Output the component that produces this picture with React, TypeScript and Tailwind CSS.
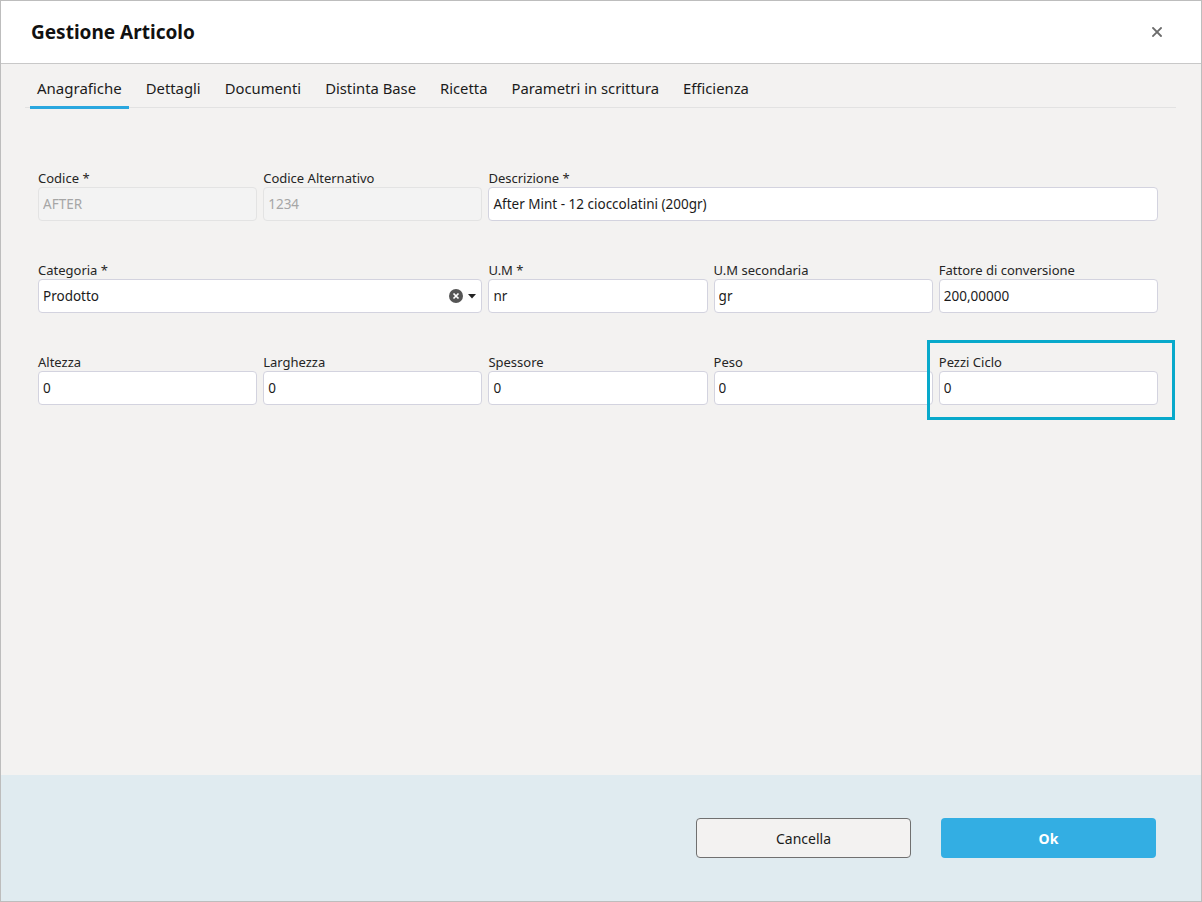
import { ReactNode } from "react";

const tabs = [
  "Anagrafiche",
  "Dettagli",
  "Documenti",
  "Distinta Base",
  "Ricetta",
  "Parametri in scrittura",
  "Efficienza",
];

function Field({
  label,
  value,
  disabled,
  className,
  children,
}: {
  label: string;
  value: string;
  disabled?: boolean;
  className?: string;
  children?: ReactNode;
}) {
  return (
    <div className={"relative flex flex-col " + (className ?? "")}>
      <label className="text-[13px] leading-[17px] text-[#252525]">{label}</label>
      <div
        className={
          disabled
            ? "h-[34px] rounded-[4px] border border-[#e3e3e3] bg-[#f3f3f3] px-[4px] flex items-center text-[13.5px] text-[#a6a6a6]"
            : "h-[34px] rounded-[4px] border border-[#d3d3df] bg-white px-[4px] flex items-center text-[13.5px] text-[#1b1b1b]"
        }
      >
        <span className="flex-1 truncate">{value}</span>
        {children}
      </div>
    </div>
  );
}

function App() {
  return (
    <div
      className="w-[1202px] h-[902px] border border-[#bdbdbd] flex flex-col bg-[#f3f2f1]"
      style={{ fontFamily: '"Noto Sans", "Open Sans", sans-serif' }}
    >
      <div className="h-[63px] shrink-0 bg-white border-b border-[#c8c8c8] flex items-center justify-between pl-[30px] pr-[39px]">
        <h1 className="text-[19px] font-bold text-[#111]">Gestione Articolo</h1>
        <svg width="10" height="10" viewBox="0 0 10 10" className="text-[#6b6b6b]">
          <path d="M1 1L9 9M9 1L1 9" stroke="currentColor" strokeWidth="1.8" strokeLinecap="square" />
        </svg>
      </div>

      <div className="flex-1 flex flex-col">
        <div className="mt-[12px] ml-[24px] mr-[25px] h-[32px] border-b border-[#e2e2e2] flex gap-[10px] pl-[5px]">
          {tabs.map((t, i) => (
            <div
              key={t}
              className={
                i === 0
                  ? "h-[33px] px-[7px] border-b-[3px] border-[#2aa7df] text-[15px] leading-[24px] text-[#1b1b1b]"
                  : "h-[33px] px-[7px] text-[14.8px] leading-[24px] text-[#1b1b1b]"
              }
            >
              {t}
            </div>
          ))}
        </div>

        <div className="mt-[62px] ml-[37px] w-[1120px] grid grid-cols-5 gap-x-[6px] gap-y-[41px]">
          <Field label="Codice *" value="AFTER" disabled />
          <Field label="Codice Alternativo" value="1234" disabled />
          <Field label="Descrizione *" value="After Mint - 12 cioccolatini (200gr)" className="col-span-3" />

          <Field label="Categoria *" value="Prodotto" className="col-span-2">
            <div className="flex items-center gap-[5px] pr-[1px]">
              <svg width="14" height="14" viewBox="0 0 14 14">
                <circle cx="7" cy="7" r="7" fill="#555" />
                <path d="M4.5 4.5L9.5 9.5M9.5 4.5L4.5 9.5" stroke="#fff" strokeWidth="1.7" />
              </svg>
              <svg width="8" height="5" viewBox="0 0 8 5">
                <path d="M0 0H8L4 4.5Z" fill="#222" />
              </svg>
            </div>
          </Field>
          <Field label="U.M *" value="nr" />
          <Field label="U.M secondaria" value="gr" />
          <Field label="Fattore di conversione" value="200,00000" />

          <Field label="Altezza" value="0" />
          <Field label="Larghezza" value="0" />
          <Field label="Spessore" value="0" />
          <Field label="Peso" value="0" />
          <Field label="Pezzi Ciclo" value="0">
            <div className="absolute -left-[12px] -right-[17px] -top-[14px] -bottom-[15px] border-[3px] border-[#08a9cb] pointer-events-none" />
          </Field>
        </div>
      </div>

      <div className="h-[126px] shrink-0 bg-[#e0ebf0] flex items-center justify-end gap-[30px] pr-[45px]">
        <button className="w-[215px] h-[40px] rounded-[4px] border border-[#707070] bg-[#f3f2f1] text-[14px] text-[#1b1b1b]">
          Cancella
        </button>
        <button className="w-[215px] h-[40px] rounded-[4px] bg-[#33aee3] text-[14px] font-bold text-white">
          Ok
        </button>
      </div>
    </div>
  );
}

export default App;
